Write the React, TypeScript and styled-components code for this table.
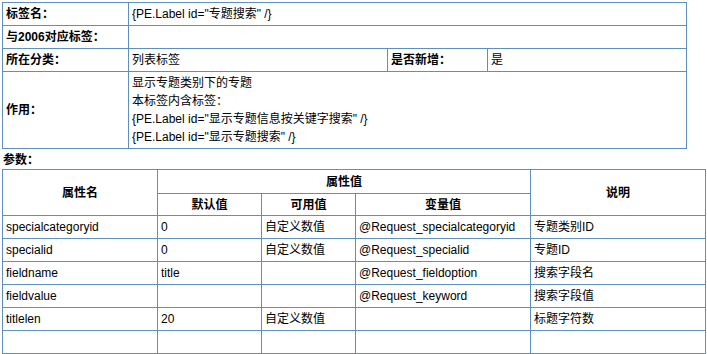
import styled, { createGlobalStyle } from 'styled-components'

const GlobalStyle = createGlobalStyle`
    html, body {
        margin: 0;
        padding: 0;
        background: #ffffff;
    }
    body {
        padding: 2px;
        font: 12px/18px "Liberation Sans", Arial, "Noto Sans CJK SC", sans-serif;
        color: #000000;
    }
`

const BORDER = '#5f8fbd'

const Table = styled.table<{ $width: number }>`
    width: ${({ $width }) => $width}px;
    border-collapse: collapse;
    table-layout: fixed;
    border: 1px solid ${BORDER};
`

const Cell = styled.td<{ $h?: number }>`
    border: 1px solid ${BORDER};
    padding: 0 3px;
    height: ${({ $h }) => $h ?? 22}px;
    vertical-align: middle;
    white-space: nowrap;
    overflow: hidden;
`

const Label = styled(Cell)`
    font-weight: bold;
`

const Head = styled.th<{ $h?: number }>`
    border: 1px solid ${BORDER};
    padding: 0;
    height: ${({ $h }) => $h ?? 22}px;
    font-weight: bold;
    text-align: center;
    vertical-align: middle;
`

const Section = styled.div`
    font-weight: bold;
    height: 20px;
    line-height: 22px;
    padding-left: 1px;
`

const Lines = styled.div`
    padding: 1px 0;
    line-height: 18px;
`

const params = [
    ['specialcategoryid', '0', '自定义数值', '@Request_specialcategoryid', '专题类别ID'],
    ['specialid', '0', '自定义数值', '@Request_specialid', '专题ID'],
    ['fieldname', 'title', '', '@Request_fieldoption', '搜索字段名'],
    ['fieldvalue', '', '', '@Request_keyword', '搜索字段值'],
    ['titlelen', '20', '自定义数值', '', '标题字符数'],
    ['', '', '', '', ''],
]

export default function App() {
    return (
        <>
            <GlobalStyle />
            <Table $width={685}>
                <colgroup>
                    <col style={{ width: 126 }} />
                    <col style={{ width: 259 }} />
                    <col style={{ width: 100 }} />
                    <col />
                </colgroup>
                <tbody>
                    <tr>
                        <Label>标签名：</Label>
                        <Cell colSpan={3}>{'{PE.Label id="专题搜索" /}'}</Cell>
                    </tr>
                    <tr>
                        <Label>与2006对应标签：</Label>
                        <Cell colSpan={3}></Cell>
                    </tr>
                    <tr>
                        <Label>所在分类：</Label>
                        <Cell>列表标签</Cell>
                        <Label>是否新增：</Label>
                        <Cell>是</Cell>
                    </tr>
                    <tr>
                        <Label $h={76}>作用：</Label>
                        <Cell colSpan={3} $h={76}>
                            <Lines>
                                显示专题类别下的专题
                                <br />
                                本标签内含标签：
                                <br />
                                {'{PE.Label id="显示专题信息按关键字搜索" /}'}
                                <br />
                                {'{PE.Label id="显示专题搜索" /}'}
                            </Lines>
                        </Cell>
                    </tr>
                </tbody>
            </Table>
            <Section>参数：</Section>
            <Table $width={704}>
                <colgroup>
                    <col style={{ width: 155 }} />
                    <col style={{ width: 104 }} />
                    <col style={{ width: 94 }} />
                    <col style={{ width: 175 }} />
                    <col />
                </colgroup>
                <thead>
                    <tr>
                        <Head rowSpan={2}>属性名</Head>
                        <Head colSpan={3} $h={23}>属性值</Head>
                        <Head rowSpan={2}>说明</Head>
                    </tr>
                    <tr>
                        <Head $h={21}>默认值</Head>
                        <Head $h={21}>可用值</Head>
                        <Head $h={21}>变量值</Head>
                    </tr>
                </thead>
                <tbody>
                    {params.map((row, i) => (
                        <tr key={i}>
                            {row.map((v, j) => (
                                <Cell key={j}>{v}</Cell>
                            ))}
                        </tr>
                    ))}
                </tbody>
            </Table>
        </>
    )
}
